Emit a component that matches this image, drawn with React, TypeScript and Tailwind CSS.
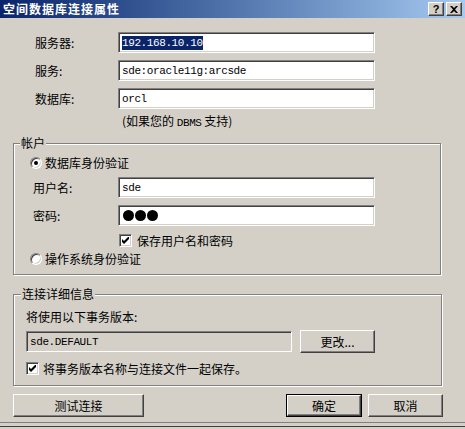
import React from "react";

const sunken =
  "border border-t-[#808080] border-l-[#808080] border-b-white border-r-white shadow-[inset_1px_1px_0_#404040,inset_-1px_-1px_0_#D4D0C8]";
const raised =
  "border border-t-white border-l-white border-b-[#404040] border-r-[#404040] shadow-[inset_-1px_-1px_0_#808080,inset_1px_1px_0_#D4D0C8]";
const mono = "font-['Liberation_Mono','Noto_Sans_CJK_SC',monospace] text-[11px] tracking-[-0.4px]";

function TextBox({ children, w = "w-[257px]", bg = "bg-white" }: { children?: React.ReactNode; w?: string; bg?: string }) {
  return (
    <div className={`${sunken} ${bg} ${w} h-[21px] flex items-center pl-[3px] shrink-0`}>{children}</div>
  );
}

function Check() {
  return (
    <div className={`${sunken} bg-white w-[13px] h-[13px] flex items-center justify-center shrink-0`}>
      <svg width="7" height="7" viewBox="0 0 7 7">
        <path d="M0 2 L2 4 L7 -1 L7 2 L2 7 L0 5 Z" fill="#000" />
      </svg>
    </div>
  );
}

function Radio({ checked }: { checked?: boolean }) {
  return (
    <div className="w-[12px] h-[12px] rounded-full border border-t-[#808080] border-l-[#808080] border-b-white border-r-white shadow-[inset_1px_1px_0_#404040,inset_-1px_-1px_0_#D4D0C8] bg-white flex items-center justify-center shrink-0">
      {checked && <div className="w-[4px] h-[4px] rounded-full bg-black" />}
    </div>
  );
}

function Btn({ children, w, def }: { children: React.ReactNode; w: string; def?: boolean }) {
  const inner = (
    <div className={`${raised} bg-[#D4D0C8] h-full w-full flex items-center justify-center`}>{children}</div>
  );
  if (def) {
    return <div className={`${w} h-[23px] border border-black shrink-0`}>{inner}</div>;
  }
  return <div className={`${w} h-[23px] shrink-0`}>{inner}</div>;
}

export default function App() {
  return (
    <div className="w-[465px] h-[429px] bg-[#D4D0C8] flex flex-col overflow-hidden font-['Noto_Sans_CJK_SC','Noto_Sans',sans-serif] text-[12px] leading-[14px] text-black">
      {/* Title bar */}
      <div className="h-[18px] shrink-0 bg-linear-to-r from-[#0A246A] to-[#A6CAF0] flex items-center justify-between pl-[3px] pr-[3px]">
        <span className="text-white font-bold text-[12px] tracking-[1px]">空间数据库连接属性</span>
        <div className="flex items-center gap-[2px]">
          <div className={`${raised} bg-[#D4D0C8] w-[16px] h-[14px] flex items-center justify-center`}>
            <span className="font-['Liberation_Sans',sans-serif] font-bold text-[11px] leading-[11px]">?</span>
          </div>
          <div className={`${raised} bg-[#D4D0C8] w-[16px] h-[14px] flex items-center justify-center`}>
            <svg width="8" height="7" viewBox="0 0 8 7">
              <path d="M0 0 L2 0 L4 2 L6 0 L8 0 L5 3.5 L8 7 L6 7 L4 5 L2 7 L0 7 L3 3.5 Z" fill="#000" />
            </svg>
          </div>
        </div>
      </div>

      {/* Top fields */}
      <div className="flex flex-col gap-[7px] mt-[14px]">
        <div className="flex items-center">
          <span className="w-[118px] pl-[35px] shrink-0">服务器:</span>
          <TextBox>
            <span className={`${mono} bg-[#0A246A] text-white`}>192.168.10.10</span>
          </TextBox>
        </div>
        <div className="flex items-center">
          <span className="w-[118px] pl-[35px] shrink-0">服务:</span>
          <TextBox>
            <span className={mono}>sde:oracle11g:arcsde</span>
          </TextBox>
        </div>
        <div className="flex items-center">
          <span className="w-[118px] pl-[35px] shrink-0">数据库:</span>
          <TextBox>
            <span className={mono}>orcl</span>
          </TextBox>
        </div>
      </div>
      <div className="h-[14px] mt-[6px] pl-[122px] flex items-center">
        <span>(如果您的 <span className={mono}>DBMS</span> 支持)</span>
      </div>

      {/* Account group */}
      <div className="ml-[13px] w-[428px] mt-[14px] relative border border-[#808080] shadow-[inset_1px_1px_0_white,1px_1px_0_white] pt-[12px] pb-[8px]">
        <span className="absolute -top-[8px] left-[6px] px-[1px] bg-[#D4D0C8]">帐户</span>
        <div className="h-[14px] flex items-center pl-[16px] gap-[3px]">
          <Radio checked />
          <span>数据库身份验证</span>
        </div>
        <div className="flex items-center mt-[7px]">
          <span className="w-[104px] pl-[19px] shrink-0">用户名:</span>
          <TextBox>
            <span className={mono}>sde</span>
          </TextBox>
        </div>
        <div className="flex items-center mt-[7px]">
          <span className="w-[104px] pl-[19px] shrink-0">密码:</span>
          <TextBox>
            <div className="flex gap-[1px] pl-[1px]">
              <div className="w-[11px] h-[11px] rounded-full bg-black" />
              <div className="w-[11px] h-[11px] rounded-full bg-black" />
              <div className="w-[11px] h-[11px] rounded-full bg-black" />
            </div>
          </TextBox>
        </div>
        <div className="h-[13px] mt-[8px] flex items-center pl-[105px] gap-[5px]">
          <Check />
          <span>保存用户名和密码</span>
        </div>
        <div className="h-[14px] mt-[5px] flex items-center pl-[16px] gap-[3px]">
          <Radio />
          <span>操作系统身份验证</span>
        </div>
      </div>

      {/* Connection details group */}
      <div className="ml-[13px] w-[429px] mt-[19px] relative border border-[#808080] shadow-[inset_1px_1px_0_white,1px_1px_0_white] pt-[15px] pb-[10px] pl-[12px]">
        <span className="absolute -top-[8px] left-[7px] px-[1px] bg-[#D4D0C8]">连接详细信息</span>
        <div className="h-[14px] flex items-center">将使用以下事务版本:</div>
        <div className="flex items-center mt-[6px] gap-[8px]">
          <TextBox w="w-[266px]" bg="bg-[#D4D0C8]">
            <span className={mono}>sde.DEFAULT</span>
          </TextBox>
          <Btn w="w-[75px]">更改...</Btn>
        </div>
        <div className="h-[13px] mt-[9px] flex items-center gap-[4px]">
          <Check />
          <span>将事务版本名称与连接文件一起保存。</span>
        </div>
      </div>

      {/* Bottom buttons */}
      <div className="flex items-center mt-[8px] pl-[13px]">
        <Btn w="w-[131px]">测试连接</Btn>
        <div className="ml-[142px]">
          <Btn w="w-[76px]" def>
            确定
          </Btn>
        </div>
        <div className="ml-[6px]">
          <Btn w="w-[75px]">取消</Btn>
        </div>
      </div>

      <div className="mt-auto mb-[3px] h-[1px] bg-[#808080] shrink-0" />
      <div className="h-[1px] bg-[#404040] shrink-0 mb-[2px]" />
    </div>
  );
}
